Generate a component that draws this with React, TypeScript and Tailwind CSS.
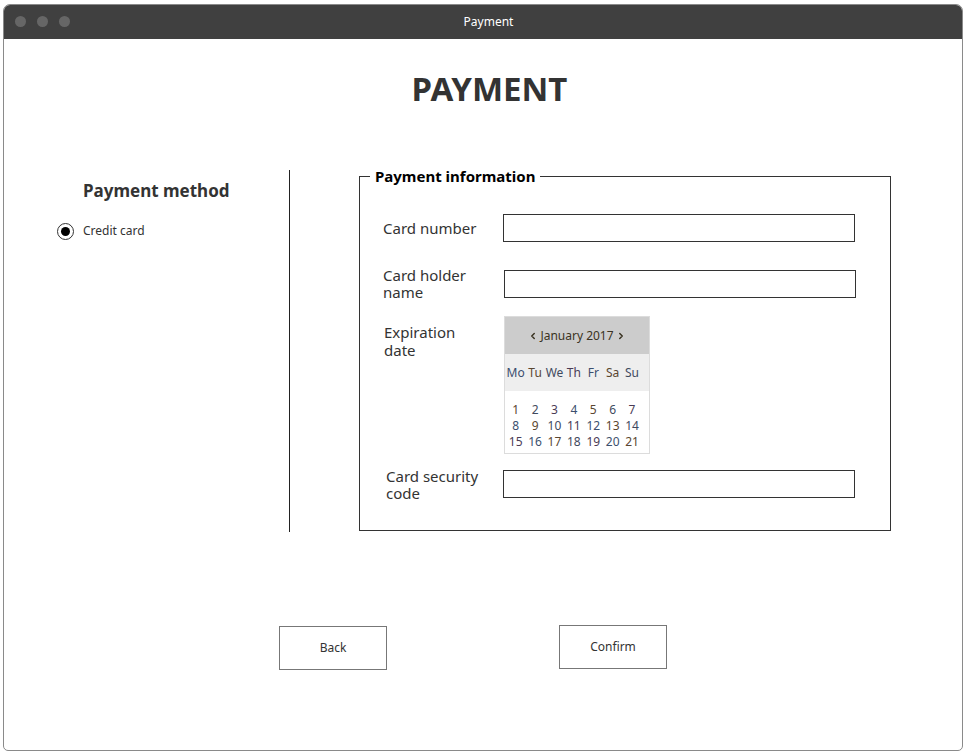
import { ChevronLeft, ChevronRight } from "lucide-react";

const DAY_NAMES = ["Mo", "Tu", "We", "Th", "Fr", "Sa", "Su"];
const DAYS = Array.from({ length: 21 }, (_, i) => i + 1);

// subpixel-ish tints seen in the reference
const TINTS = ["text-[#3b4f6e]", "text-[#5a4630]", "text-[#3f4a5e]", "text-[#4a3b55]"];

function Field({
  label,
  children,
  className = "",
  labelClass = "",
}: {
  label: string;
  children: React.ReactNode;
  className?: string;
  labelClass?: string;
}) {
  return (
    <div className={`flex items-center ${className}`}>
      <div className={`w-[120px] text-[15px] leading-[17px] text-[#333] ${labelClass}`}>{label}</div>
      {children}
    </div>
  );
}

function TextBox() {
  return <div className="h-[28px] w-[352px] border border-[#333] bg-white" />;
}

function Calendar() {
  return (
    <div className="w-[146px] border border-[#dcdcdc] bg-white text-[12px]">
      <div className="flex h-[37px] items-center justify-center gap-[2px] bg-[#cccccc] text-[#3a3322]">
        <ChevronLeft size={10} strokeWidth={3.5} />
        <span>January 2017</span>
        <ChevronRight size={10} strokeWidth={3.5} />
      </div>
      <div className="grid h-[37px] grid-cols-[repeat(7,19.4px)] items-center bg-[#eeeeee] pl-[1px]">
        {DAY_NAMES.map((d, i) => (
          <span key={d} className={`text-center ${TINTS[i % TINTS.length]}`}>
            {d}
          </span>
        ))}
      </div>
      <div className="grid grid-cols-[repeat(7,19.4px)] pl-[1px] pt-[11px] pb-[3px] leading-[16px]">
        {DAYS.map((d, i) => (
          <span key={d} className={`text-center ${TINTS[(i + 1) % TINTS.length]}`}>
            {d}
          </span>
        ))}
      </div>
    </div>
  );
}

export default function App() {
  return (
    <div className="min-h-[753px] bg-white pl-[3px] pt-[4px] font-['Noto_Sans',sans-serif]">
      <div className="flex h-[747px] w-[960px] flex-col overflow-hidden rounded-t-[7px] rounded-b-[5px] border border-[#8a8a8a]">
        <div className="relative flex h-[34px] shrink-0 items-center bg-[#404040] pl-[11px]">
          <div className="-mt-px flex gap-[11px]">
            <span className="h-[11px] w-[11px] rounded-full bg-[#666]" />
            <span className="h-[11px] w-[11px] rounded-full bg-[#666]" />
            <span className="h-[11px] w-[11px] rounded-full bg-[#666]" />
          </div>
          <div className="absolute inset-0 flex items-center justify-center pl-[11px] text-[12px] text-white">
            Payment
          </div>
        </div>

        <h1 className="mt-[30px] pl-[13px] text-center text-[33px] font-bold leading-[40px] text-[#333]">
          PAYMENT
        </h1>

        <div className="mt-[56px] flex items-start">
          <div className="mt-[5px] h-[362px] w-[286px] shrink-0 border-r border-[#222]">
            <div className="pl-[79px] pt-[9px] text-[17px] font-bold leading-[24px] text-[#333]">
              Payment method
            </div>
            <div className="mt-[19px] flex items-center pl-[53px]">
              <span className="flex h-[17px] w-[17px] items-center justify-center rounded-full border-[1.5px] border-[#333]">
                <span className="h-[9px] w-[9px] rounded-full bg-black" />
              </span>
              <span className="ml-[9px] text-[12px] text-[#333]">Credit card</span>
            </div>
          </div>

          <fieldset className="ml-[69px] h-[366px] w-[532px] border border-[#333] pl-[23px]">
            <legend className="ml-[-13px] px-[5px] text-[15px] font-bold leading-[22px] text-black">
              Payment information
            </legend>
            <Field label="Card number" className="mt-[27px]">
              <TextBox />
            </Field>
            <Field label="Card holder name" className="mt-[25px]">
              <div className="ml-[1px]">
                <TextBox />
              </div>
            </Field>
            <div className="mt-[15px] flex items-start">
              <div className="ml-[1px] w-[120px] pt-[7px] text-[15px] leading-[18px] text-[#333]">
                Expiration
                <br />
                date
              </div>
              <Calendar />
            </div>
            <Field label="Card security code" className="mt-[14px]" labelClass="pl-[3px] w-[120px]">
              <div className="-mt-[3px]">
                <TextBox />
              </div>
            </Field>
          </fieldset>
        </div>

        <div className="mt-[94px] flex items-start pl-[275px]">
          <button className="h-[44px] w-[108px] border-[1.5px] border-[#777] bg-white text-[12px] text-[#333]">
            Back
          </button>
          <button className="-mt-px ml-[172px] h-[44px] w-[108px] border-[1.5px] border-[#777] bg-white text-[12px] text-[#333]">
            Confirm
          </button>
        </div>
      </div>
    </div>
  );
}
